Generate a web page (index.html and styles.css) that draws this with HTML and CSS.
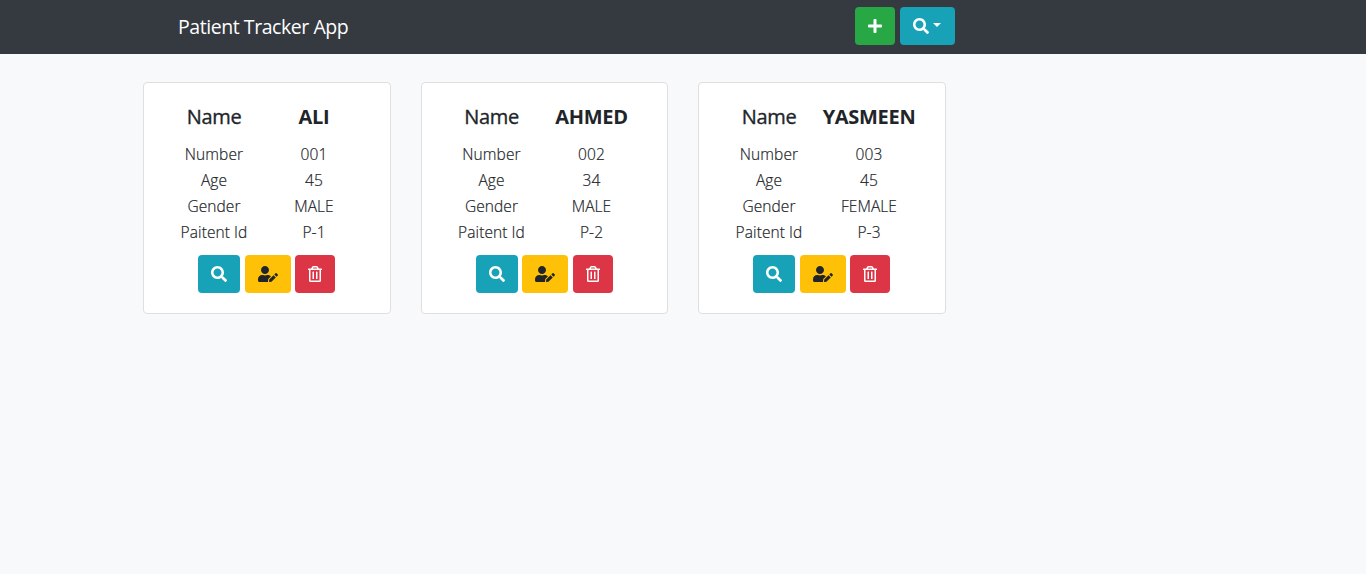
FILE: index.html
```html
<!DOCTYPE html>
<html lang="en">
<head>
<meta charset="utf-8">
<title>Patient Tracker App</title>
<link rel="stylesheet" href="styles.css">
</head>
<body>
<svg width="0" height="0" class="sprite" aria-hidden="true">
  <symbol id="search" viewBox="0 0 512 512"><path d="M505 442.7L405.3 343c-4.5-4.5-10.6-7-17-7H372c27.6-35.3 44-79.7 44-128C416 93.1 322.9 0 208 0S0 93.1 0 208s93.1 208 208 208c48.3 0 92.7-16.4 128-44v16.3c0 6.4 2.5 12.5 7 17l99.7 99.7c9.4 9.4 24.6 9.4 33.9 0l28.3-28.3c9.4-9.4 9.4-24.6.1-34zM208 336c-70.7 0-128-57.2-128-128 0-70.7 57.2-128 128-128 70.7 0 128 57.2 128 128 0 70.7-57.2 128-128 128z"/></symbol>
  <symbol id="edit" viewBox="0 0 640 512"><path d="M224 256c70.7 0 128-57.3 128-128S294.7 0 224 0 96 57.3 96 128s57.3 128 128 128zm89.6 32h-16.7c-22.2 10.2-46.9 16-72.9 16s-50.6-5.8-72.9-16h-16.7C60.2 288 0 348.2 0 422.4V464c0 26.5 21.5 48 48 48h274.9c-2.4-6.8-3.4-14-2.6-21.3l6.8-60.9 1.2-11.1 7.9-7.9 77.3-77.3c-24.5-27.7-60-45.5-99.9-45.5zm45.3 145.3l-6.8 61c-1.1 10.2 7.5 18.8 17.6 17.6l60.9-6.8 137.9-137.9-71.7-71.7-137.9 137.8zM633 268.9L595.1 231c-9.3-9.3-24.5-9.3-33.8 0l-37.8 37.8-4.1 4.1 71.8 71.7 41.8-41.8c9.3-9.4 9.3-24.5 0-33.9z"/></symbol>
  <symbol id="trash" viewBox="0 0 448 512"><path d="M268 416h24a12 12 0 0 0 12-12V188a12 12 0 0 0-12-12h-24a12 12 0 0 0-12 12v216a12 12 0 0 0 12 12zM432 80h-82.41l-34-56.7A48 48 0 0 0 274.41 0H173.59a48 48 0 0 0-41.16 23.3L98.41 80H16A16 16 0 0 0 0 96v16a16 16 0 0 0 16 16h16v336a48 48 0 0 0 48 48h288a48 48 0 0 0 48-48V128h16a16 16 0 0 0 16-16V96a16 16 0 0 0-16-16zM171.84 50.91A6 6 0 0 1 177 48h94a6 6 0 0 1 5.15 2.91L293.61 80H154.39zM368 464H80V128h288zm-212-48h24a12 12 0 0 0 12-12V188a12 12 0 0 0-12-12h-24a12 12 0 0 0-12 12v216a12 12 0 0 0 12 12z"/></symbol>
  <symbol id="plus" viewBox="0 0 448 512"><path d="M416 208H272V64c0-17.67-14.33-32-32-32h-32c-17.67 0-32 14.33-32 32v144H32c-17.67 0-32 14.33-32 32v32c0 17.67 14.33 32 32 32h144v144c0 17.67 14.33 32 32 32h32c17.67 0 32-14.33 32-32V304h144c17.67 0 32-14.33 32-32v-32c0-17.67-14.33-32-32-32z"/></symbol>
</svg>
<header class="navbar">
  <div class="navbar-inner">
    <span class="brand">Patient Tracker App</span>
    <div class="tools">
      <button class="btn success" aria-label="Add"><svg class="i14"><use href="#plus"/></svg></button>
      <button class="btn info" aria-label="Search"><svg class="i16"><use href="#search"/></svg><span class="caret"></span></button>
    </div>
  </div>
</header>
<main class="cards">
  <article class="card">
    <div class="fields">
      <h5 class="label">Name</h5><h5 class="name">ALI</h5>
      <span>Number</span><span>001</span>
      <span>Age</span><span>45</span>
      <span>Gender</span><span>MALE</span>
      <span>Paitent Id</span><span>P-1</span>
    </div>
    <div class="actions">
      <button class="btn info" aria-label="View"><svg class="i16"><use href="#search"/></svg></button>
      <button class="btn warning" aria-label="Edit"><svg class="i20"><use href="#edit"/></svg></button>
      <button class="btn danger" aria-label="Delete"><svg class="i14"><use href="#trash"/></svg></button>
    </div>
  </article>
  <article class="card">
    <div class="fields">
      <h5 class="label">Name</h5><h5 class="name">AHMED</h5>
      <span>Number</span><span>002</span>
      <span>Age</span><span>34</span>
      <span>Gender</span><span>MALE</span>
      <span>Paitent Id</span><span>P-2</span>
    </div>
    <div class="actions">
      <button class="btn info" aria-label="View"><svg class="i16"><use href="#search"/></svg></button>
      <button class="btn warning" aria-label="Edit"><svg class="i20"><use href="#edit"/></svg></button>
      <button class="btn danger" aria-label="Delete"><svg class="i14"><use href="#trash"/></svg></button>
    </div>
  </article>
  <article class="card">
    <div class="fields">
      <h5 class="label">Name</h5><h5 class="name">YASMEEN</h5>
      <span>Number</span><span>003</span>
      <span>Age</span><span>45</span>
      <span>Gender</span><span>FEMALE</span>
      <span>Paitent Id</span><span>P-3</span>
    </div>
    <div class="actions">
      <button class="btn info" aria-label="View"><svg class="i16"><use href="#search"/></svg></button>
      <button class="btn warning" aria-label="Edit"><svg class="i20"><use href="#edit"/></svg></button>
      <button class="btn danger" aria-label="Delete"><svg class="i14"><use href="#trash"/></svg></button>
    </div>
  </article>
</main>
</body>
</html>
```
FILE: styles.css
```css
* { box-sizing: border-box; }
body {
  margin: 0;
  background: #f8f9fa;
  color: #212529;
  font: 300 16px/24px "Segoe UI", "Open Sans", "Noto Sans", sans-serif;
}
.sprite { display: none; }
.navbar { height: 54px; background: #343a40; }
.navbar-inner {
  display: flex;
  align-items: center;
  justify-content: space-between;
  width: 777px;
  height: 52px;
  margin-left: 178px;
}
.brand { color: #fff; font-size: 19.5px; font-weight: 400; line-height: 30px; letter-spacing: -0.44px; padding-top: 2px; }
.tools { display: flex; gap: 5px; }
.btn {
  display: flex;
  align-items: center;
  height: 38px;
  padding: 0 13px;
  border: 0;
  border-radius: 4px;
  color: #fff;
}
.btn svg { display: block; height: 16px; fill: currentColor; }
.i14 { width: 14px; }
.i16 { width: 16px; }
.i20 { width: 20px; }
.success { background: #28a745; }
.info { background: #17a2b8; }
.warning { background: #ffc107; color: #212529; }
.danger { background: #dc3545; }
.caret {
  margin: -2px 0 0 4px;
  border: 4.8px solid transparent;
  border-top-color: #fff;
  border-bottom: 0;
}
.tools .info { padding-right: 12.5px; width: 55px; }
.cards {
  display: grid;
  grid-template-columns: repeat(3, 247.5px);
  gap: 30px;
  padding: 28px 0 0 143px;
}
.card {
  height: 232px;
  padding: 20px;
  background: #fff;
  border: 1px solid #dfdfdf;
  border-radius: 4px;
}
.fields {
  display: grid;
  grid-template-columns: 100px 100px;
  grid-template-rows: 39px repeat(4, 26px);
  justify-items: center;
  white-space: nowrap;
}
.fields span { font-size: 15.5px; line-height: 25px; letter-spacing: 0.08px; -webkit-text-stroke: 0.2px currentColor; }
h5 { margin: 0; font-size: 20px; line-height: 28px; }
.label { font-weight: 500; letter-spacing: -0.3px; -webkit-text-stroke: 0.35px currentColor; }
.name { font-weight: 700; letter-spacing: -0.3px; }
.actions { display: flex; justify-content: center; gap: 4.5px; margin-top: 9px; }
```
